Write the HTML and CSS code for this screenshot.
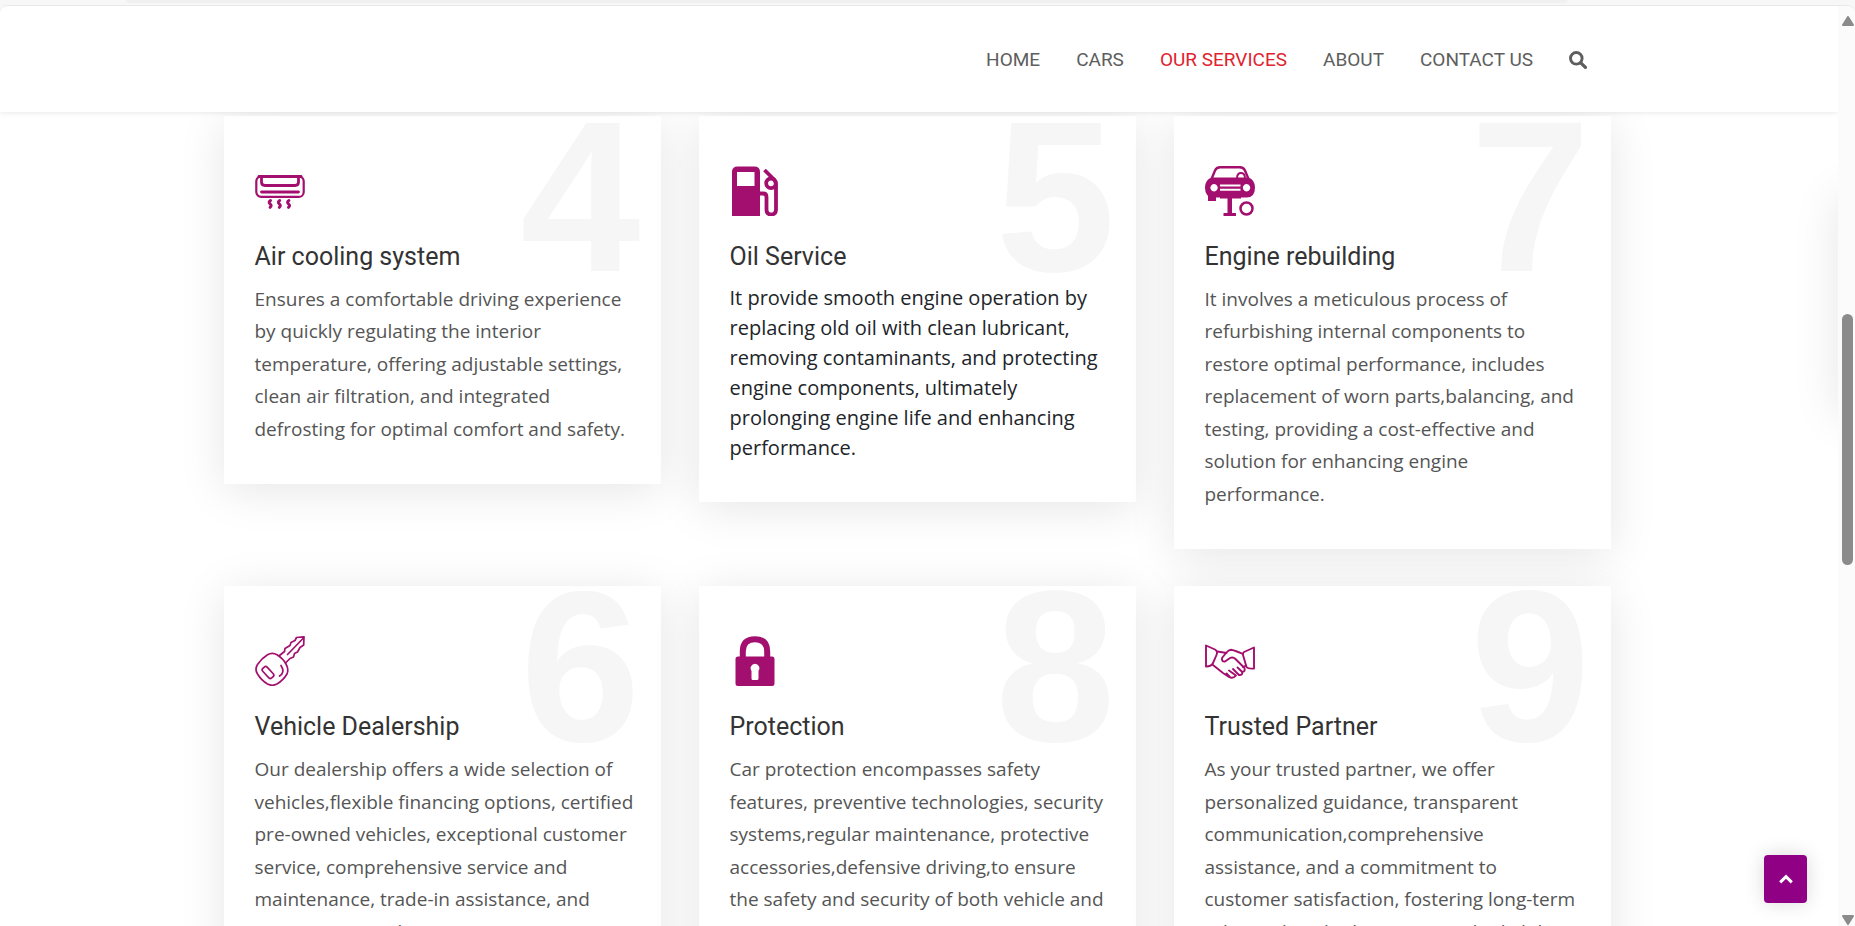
FILE: index.html
```html
<!DOCTYPE html>
<html lang="en">
<head>
<meta charset="utf-8">
<title>Our Services</title>
<link rel="stylesheet" href="styles.css">
</head>
<body>
<div class="tabstrip"><div class="tabstrip-bar"></div></div>
<div class="window">
  <div class="page">
    <header class="header">
      <nav class="nav">
        <a href="#">HOME</a>
        <a href="#">CARS</a>
        <a href="#" class="active">OUR SERVICES</a>
        <a href="#">ABOUT</a>
        <a href="#">CONTACT US</a>
        <button class="search" type="button" aria-label="Search">
          <svg viewBox="0 0 18 18" width="18" height="18" fill="none" stroke="currentColor"><circle cx="7.3" cy="7.3" r="5.8" stroke-width="2.9"/><path d="M11.8 11.8l4.6 4.6" stroke-width="3.3" stroke-linecap="round"/></svg>
        </button>
      </nav>
    </header>
    <main class="services">
      <article class="card">
        <span class="number">4</span>
        <svg class="icon" viewBox="0 0 50 50" fill="none" stroke="currentColor" stroke-width="2.2" stroke-linecap="round" stroke-linejoin="round"><rect x="1.3" y="10.3" width="47.4" height="20.6" rx="5"/><path d="M4 10.5h42" stroke-width="2.8"/><path d="M6.5 11v5q0 3.5 3.5 3.5h30q3.5 0 3.5-3.5v-5" stroke-width="2.8"/><path d="M6.5 26h37" stroke-width="2.8"/><path d="M15.5 34.5q-2.5 1.5-.4 3.3t0 3.5M24.7 34.5q-2.5 1.5-.4 3.3t0 3.5M33.9 34.5q-2.5 1.5-.4 3.3t0 3.5" stroke-width="3"/></svg>
        <h2>Air cooling system</h2>
        <p>Ensures a comfortable driving experience by quickly regulating the interior temperature, offering adjustable settings, clean air filtration, and integrated defrosting for optimal comfort and safety.</p>
      </article>
      <article class="card">
        <span class="number">5</span>
        <svg class="icon" viewBox="0 0 50 50" fill="currentColor"><path fill-rule="evenodd" d="M2 50V6Q2 .5 7.5 .5H24.5Q30 .5 30 6V50ZM7 6V20H24.5V6Z"/><g fill="none" stroke="currentColor"><path d="M30 27.5h3q3.5 0 3.5 3.5v12.5q0 5 4.7 5t4.8-5V18.5q0-3-2-5L34.5 4" stroke-width="3.8"/><circle cx="41" cy="17.3" r="4.8" stroke-width="3.8"/></g></svg>
        <h2>Oil Service</h2>
        <p class="plain">It provide smooth engine operation by replacing old oil with clean lubricant, removing contaminants, and protecting engine components, ultimately prolonging engine life and enhancing performance.</p>
      </article>
      <article class="card">
        <span class="number">7</span>
        <svg class="icon" viewBox="0 0 50 50" fill="currentColor"><path d="M6.5 13L10 4.5Q11.5 1.3 15 1.3H35Q38.5 1.3 40 4.5L43.5 13" fill="none" stroke="currentColor" stroke-width="2.4"/><path d="M32 12q.3-5 4-5t4 5" fill="none" stroke="currentColor" stroke-width="2"/><path fill-rule="evenodd" d="M6.5 11.5H43.5Q50 14 50 21.5 50 31.5 41.5 31.5H8.5Q0 31.5 0 21.5 0 14 6.5 11.5ZM9 18a3.7 3.7 0 1 0 .1 0ZM41.5 18a3.7 3.7 0 1 0 .1 0ZM15 18.5v2H35.5v-2ZM15 22.7v2H35.5v-2Z"/><path d="M3 27h8v8H3ZM15 29h21v3.5H27V47h4v3H18.5v-3h4V32.5H15Z"/><circle cx="41.5" cy="42.5" r="6" fill="none" stroke="currentColor" stroke-width="2.5"/></svg>
        <h2>Engine rebuilding</h2>
        <p>It involves a meticulous process of refurbishing internal components to restore optimal performance, includes replacement of worn parts,balancing, and testing, providing a cost-effective and solution for enhancing engine performance.</p>
      </article>
      <article class="card">
        <span class="number">6</span>
        <svg class="icon" viewBox="0 0 50 50" fill="none" stroke="currentColor" stroke-width="1.7" stroke-linejoin="round" stroke-linecap="round"><path d="M12.5 18.8Q17.3 16 22 18.8Q28 22.5 31 28Q34 33.5 32 38Q28 44.5 22 48Q17.3 50.5 12.5 48Q6.5 44.5 2.5 38Q-.5 33.5 2.5 28.5Q6.5 22.5 12.5 18.8Z"/><path d="M24.5 19.5L29.5 15.5 30 12.5 35 9.5 36 6.5 40 4.5 41.5 1.5 49 .8 48.7 9 45 11.5 42.5 16 39.5 17.5 38.5 21 35 22.5 30.5 27"/><path d="M32.5 18.5L48.5 2"/><path d="M26 29.5q4.5 7-1.5 10.5"/><rect x="6.5" y="33.5" width="13" height="6" rx="2" transform="rotate(47 13 36.5)"/></svg>
        <h2>Vehicle Dealership</h2>
        <p>Our dealership offers a wide selection of vehicles,flexible financing options, certified pre-owned vehicles, exceptional customer service, comprehensive service and maintenance, trade-in assistance, and communication line.</p>
      </article>
      <article class="card">
        <span class="number">8</span>
        <svg class="icon" viewBox="0 0 50 50" fill="currentColor"><path d="M12.8 22V15.5Q12.8 3.3 25 3.3T37.2 15.5V22" fill="none" stroke="currentColor" stroke-width="6"/><path fill-rule="evenodd" d="M8 20.5H42Q44.5 20.5 44.5 23V47.5Q44.5 50 42 50H8Q5.5 50 5.5 47.5V23Q5.5 20.5 8 20.5ZM25 27.7A4.6 4.6 0 0 0 21.5 35V42.5Q21.5 44 23 44H27Q28.5 44 28.5 42.5V35A4.6 4.6 0 0 0 25 27.7Z"/></svg>
        <h2>Protection</h2>
        <p>Car protection encompasses safety features, preventive technologies, security systems,regular maintenance, protective accessories,defensive driving,to ensure the safety and security of both vehicle and its occupants.</p>
      </article>
      <article class="card">
        <span class="number">9</span>
        <svg class="icon" viewBox="0 0 50 50" fill="none" stroke="currentColor" stroke-width="1.9" stroke-linejoin="round" stroke-linecap="round"><path d="M1 9.5L10 13.5Q13 15.5 11.5 19L8 27Q6.5 30.5 1 30.5ZM49 11.5L39 16Q37.5 17 38 19L41.5 31Q43 33 49 32.5Z"/><path d="M12.5 15.5L21.5 17M8 29L18 37 24 41Q28 43 31 39.5M38 18Q29 14 26 13.7Q23.5 14 21 17L17 22Q16.5 26 20 25.5L25 22Q28 20.5 30.5 23L39.5 32Q40.5 36 37 35.8L32.5 31.5M37 35.8Q38 39.5 34 39L28 33M31 39.5L24 34.5M41 29.5L38 31M25 41L21.5 37.5"/></svg>
        <h2>Trusted Partner</h2>
        <p>As your trusted partner, we offer personalized guidance, transparent communication,comprehensive assistance, and a commitment to customer satisfaction, fostering long-term relationships built on trust and reliability.</p>
      </article>
    </main>
    <div class="next-panel"></div>
    <button class="to-top" type="button" aria-label="Back to top"><svg viewBox="0 0 14 10" width="14" height="10" fill="none" stroke="currentColor" stroke-width="3"><path d="M1.2 8.3L7 2.7l5.8 5.6"/></svg></button>
  </div>
  <div class="scrollbar">
    <svg viewBox="0 0 12 10" width="12" height="10"><path d="M6 1L11 9H1Z" fill="#8b8b8b" stroke="#8b8b8b" stroke-width="2" stroke-linejoin="round"/></svg>
    <div class="thumb"></div>
    <svg viewBox="0 0 12 10" width="12" height="10"><path d="M6 9L11 1H1Z" fill="#8b8b8b" stroke="#8b8b8b" stroke-width="2" stroke-linejoin="round"/></svg>
  </div>
</div>
</body>
</html>
```

FILE: styles.css
```css
* { box-sizing: border-box; }
body {
  margin: 0;
  height: 100vh;
  display: flex;
  flex-direction: column;
  overflow: hidden;
  background: #f7f7f7;
  color: #212529;
  font-family: "Open Sans", sans-serif;
}
.tabstrip { height: 5px; flex: none; padding: 0 288px 0 126px; }
.tabstrip-bar { height: 3px; background: #f0f0f0; border-radius: 0 0 4px 4px; }
.window {
  flex: 1;
  min-height: 0;
  display: flex;
  overflow: hidden;
  background: #fff;
  border-top: 1px solid #e8e8e8;
  border-radius: 8px 8px 0 0;
}
.page { position: relative; flex: 1; min-width: 0; overflow: hidden; }
.header {
  position: relative;
  z-index: 2;
  height: 106px;
  display: flex;
  align-items: center;
  justify-content: flex-end;
  padding: 2px 251px 0 0;
  background: #fff;
  box-shadow: 0 0 6px rgba(0, 0, 0, 0.12);
}
.nav { display: flex; align-items: center; gap: 36px; }
.nav a { color: #5e5e5e; font: 19px/24px Roboto, sans-serif; text-decoration: none; }
.nav a.active { color: #e0232e; }
.search { display: flex; padding: 0; border: 0; background: none; color: #5e5e5e; }
.services {
  max-width: 1391px;
  margin: 0 auto;
  padding: 4px 4px 0 0;
  display: grid;
  grid-template-columns: repeat(3, 1fr);
  gap: 37px 38px;
  align-items: start;
}
.card {
  position: relative;
  padding: 50px 26px 39px 31px;
  background: #fff;
  box-shadow: 0 6px 44px rgba(0, 0, 0, 0.1);
}
.number {
  position: absolute;
  top: 0;
  right: 20px;
  color: #f6f6f6;
  font: bold 216px/160px "Liberation Sans", Arial, sans-serif;
}
.icon { position: relative; display: block; width: 50px; height: 50px; color: #a30f6e; }
.card h2 {
  position: relative;
  margin: 26px 0 11px;
  color: #333;
  font: 25px/30px Roboto, sans-serif;
}
.card p { position: relative; margin: 0; color: #555; font-size: 19px; line-height: 1.71; }
.card .plain { color: #212529; font-size: 20px; line-height: 30px; }
.next-panel {
  position: absolute;
  top: 184px;
  left: 100%;
  width: 400px;
  height: 220px;
  box-shadow: 0 6px 44px rgba(0, 0, 0, 0.1);
}
.to-top {
  position: absolute;
  right: 31px;
  bottom: 23px;
  width: 43px;
  height: 48px;
  display: flex;
  align-items: center;
  justify-content: center;
  border: 0;
  border-radius: 4px;
  background: #900085;
  color: #fff;
  box-shadow: 0 0 19px rgba(0, 0, 0, 0.15);
}
.scrollbar {
  width: 17px;
  padding: 10px 0 1px 2px;
  display: flex;
  flex-direction: column;
  align-items: center;
  background: #fbfbfb;
}
.thumb { width: 11px; height: 251px; margin: 288px 0 auto; border-radius: 6px; background: #8b8b8b; }
```
